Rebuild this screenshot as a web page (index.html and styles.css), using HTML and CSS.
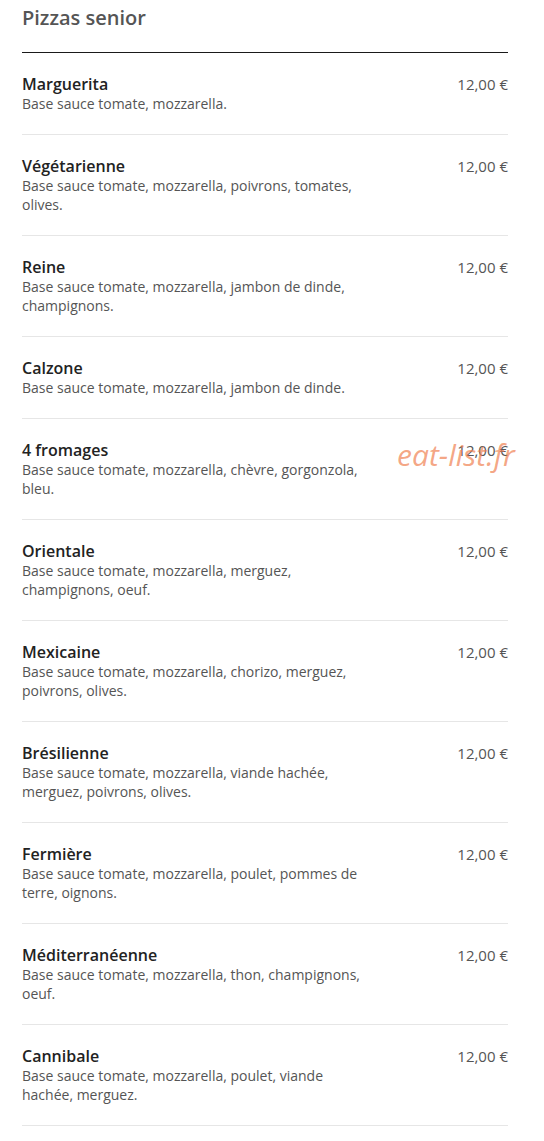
FILE: index.html
```html
<!DOCTYPE html>
<html lang="fr">
<head>
<meta charset="utf-8">
<title>Pizzas senior</title>
<link rel="stylesheet" href="styles.css">
</head>
<body>
<div class="menu">
  <div class="section-head">
    <h2 class="section-title">Pizzas senior</h2>
  </div>
  <ul class="items">
    <li class="item"><div class="info"><div class="name">Marguerita</div><div class="desc">Base sauce tomate, mozzarella.</div></div><div class="price">12,00 €</div></li>
    <li class="item"><div class="info"><div class="name">Végétarienne</div><div class="desc">Base sauce tomate, mozzarella, poivrons, tomates, olives.</div></div><div class="price">12,00 €</div></li>
    <li class="item"><div class="info"><div class="name">Reine</div><div class="desc">Base sauce tomate, mozzarella, jambon de dinde, champignons.</div></div><div class="price">12,00 €</div></li>
    <li class="item"><div class="info"><div class="name">Calzone</div><div class="desc">Base sauce tomate, mozzarella, jambon de dinde.</div></div><div class="price">12,00 €</div></li>
    <li class="item"><div class="info"><div class="name">4 fromages</div><div class="desc">Base sauce tomate, mozzarella, chèvre, gorgonzola, bleu.</div></div><div class="price">12,00 €</div><span class="watermark">eat-list.fr</span></li>
    <li class="item"><div class="info"><div class="name">Orientale</div><div class="desc">Base sauce tomate, mozzarella, merguez, champignons, oeuf.</div></div><div class="price">12,00 €</div></li>
    <li class="item"><div class="info"><div class="name">Mexicaine</div><div class="desc">Base sauce tomate, mozzarella, chorizo, merguez, poivrons, olives.</div></div><div class="price">12,00 €</div></li>
    <li class="item"><div class="info"><div class="name">Brésilienne</div><div class="desc">Base sauce tomate, mozzarella, viande hachée, merguez, poivrons, olives.</div></div><div class="price">12,00 €</div></li>
    <li class="item"><div class="info"><div class="name">Fermière</div><div class="desc">Base sauce tomate, mozzarella, poulet, pommes de terre, oignons.</div></div><div class="price">12,00 €</div></li>
    <li class="item"><div class="info"><div class="name">Méditerranéenne</div><div class="desc">Base sauce tomate, mozzarella, thon, champignons, oeuf.</div></div><div class="price">12,00 €</div></li>
    <li class="item"><div class="info"><div class="name">Cannibale</div><div class="desc">Base sauce tomate, mozzarella, poulet, viande hachée, merguez.</div></div><div class="price">12,00 €</div></li>
  </ul>
</div>
</body>
</html>
```

FILE: styles.css
```css
html, body {
  margin: 0;
  padding: 0;
  background: #fff;
}
body {
  font-family: "Open Sans", "Liberation Sans", sans-serif;
  color: #555;
}
.menu {
  width: 486px;
  margin-left: 22px;
}
.section-head {
  padding-top: 4px;
  padding-bottom: 20px;
  border-bottom: 1px solid #1a1a1a;
}
.section-title {
  margin: 0;
  font-size: 20px;
  line-height: 28px;
  font-weight: 600;
  color: #555;
}
.items {
  list-style: none;
  margin: 0;
  padding: 0;
}
.item {
  position: relative;
  display: flex;
  justify-content: space-between;
  align-items: flex-start;
  padding: 21px 0;
  border-bottom: 1px solid #e6e6e6;
}
.info {
  width: 346px;
}
.name {
  font-size: 16px;
  line-height: 20px;
  font-weight: 600;
  color: #222;
}
.desc {
  font-size: 14px;
  line-height: 19px;
  color: #555;
}
.price {
  font-size: 15px;
  line-height: 20px;
  color: #555;
  white-space: nowrap;
}
.watermark {
  position: absolute;
  left: 375px;
  top: 18px;
  font-size: 30px;
  line-height: 36px;
  font-style: italic;
  white-space: nowrap;
  color: rgba(240, 128, 80, 0.7);
  pointer-events: none;
}
```
